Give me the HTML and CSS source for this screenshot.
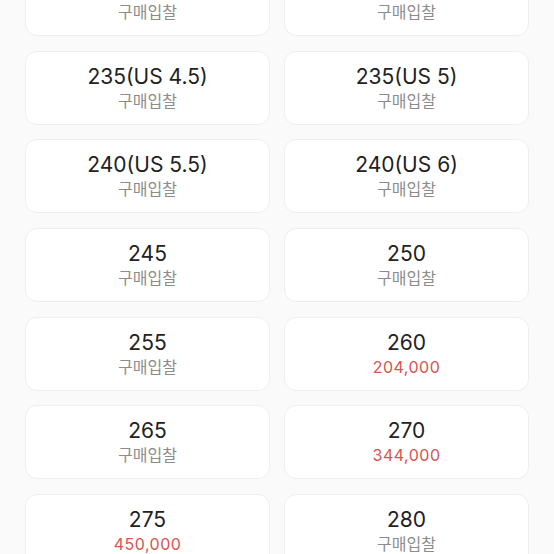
FILE: index.html
```html
<!DOCTYPE html>
<html lang="ko">
<head>
  <meta charset="UTF-8">
  <meta name="viewport" content="width=device-width, initial-scale=1.0">
  <title>사이즈 선택</title>
  <link rel="stylesheet" href="styles.css">
</head>
<body>
  <div class="size-list">
    <div class="size-card">
      <span class="size">230(US 4)</span>
      <span class="price">구매입찰</span>
    </div>
    <div class="size-card">
      <span class="size">230(US 4.5)</span>
      <span class="price">구매입찰</span>
    </div>

    <div class="size-card">
      <span class="size">235(US 4.5)</span>
      <span class="price">구매입찰</span>
    </div>
    <div class="size-card">
      <span class="size">235(US 5)</span>
      <span class="price">구매입찰</span>
    </div>

    <div class="size-card">
      <span class="size">240(US 5.5)</span>
      <span class="price">구매입찰</span>
    </div>
    <div class="size-card">
      <span class="size">240(US 6)</span>
      <span class="price">구매입찰</span>
    </div>

    <div class="size-card">
      <span class="size">245</span>
      <span class="price">구매입찰</span>
    </div>
    <div class="size-card">
      <span class="size">250</span>
      <span class="price">구매입찰</span>
    </div>

    <div class="size-card">
      <span class="size">255</span>
      <span class="price">구매입찰</span>
    </div>
    <div class="size-card">
      <span class="size">260</span>
      <span class="price has-price">204,000</span>
    </div>

    <div class="size-card">
      <span class="size">265</span>
      <span class="price">구매입찰</span>
    </div>
    <div class="size-card">
      <span class="size">270</span>
      <span class="price has-price">344,000</span>
    </div>

    <div class="size-card">
      <span class="size">275</span>
      <span class="price has-price">450,000</span>
    </div>
    <div class="size-card">
      <span class="size">280</span>
      <span class="price">구매입찰</span>
    </div>
  </div>
</body>
</html>
```

FILE: styles.css
```css
* {
  margin: 0;
  padding: 0;
  box-sizing: border-box;
}

html, body {
  height: 100%;
  overflow: hidden;
}

body {
  background: #fafafa;
  font-family: Inter, "Noto Sans CJK KR", sans-serif;
  color: #222;
}

/* list is scrolled a little, so the first row is cut off */
.size-list {
  display: grid;
  grid-template-columns: 1fr 1fr;
  column-gap: 14px;
  row-gap: 14.7px;
  padding: 0 25px;
  margin-top: -38px;
}

.size-card {
  height: 74px;
  background: #fff;
  border: 1px solid #eeeeee;
  border-radius: 12px;
  display: flex;
  flex-direction: column;
  align-items: center;
  justify-content: center;
  padding-top: 1px;
}

.size {
  font-size: 21px;
  line-height: 26px;
  color: #222;
}

.price {
  font-size: 16px;
  line-height: 23px;
  color: #8c8c8c;
}

.price.has-price {
  letter-spacing: 0.5px;
  color: #d9534f;
}
```
